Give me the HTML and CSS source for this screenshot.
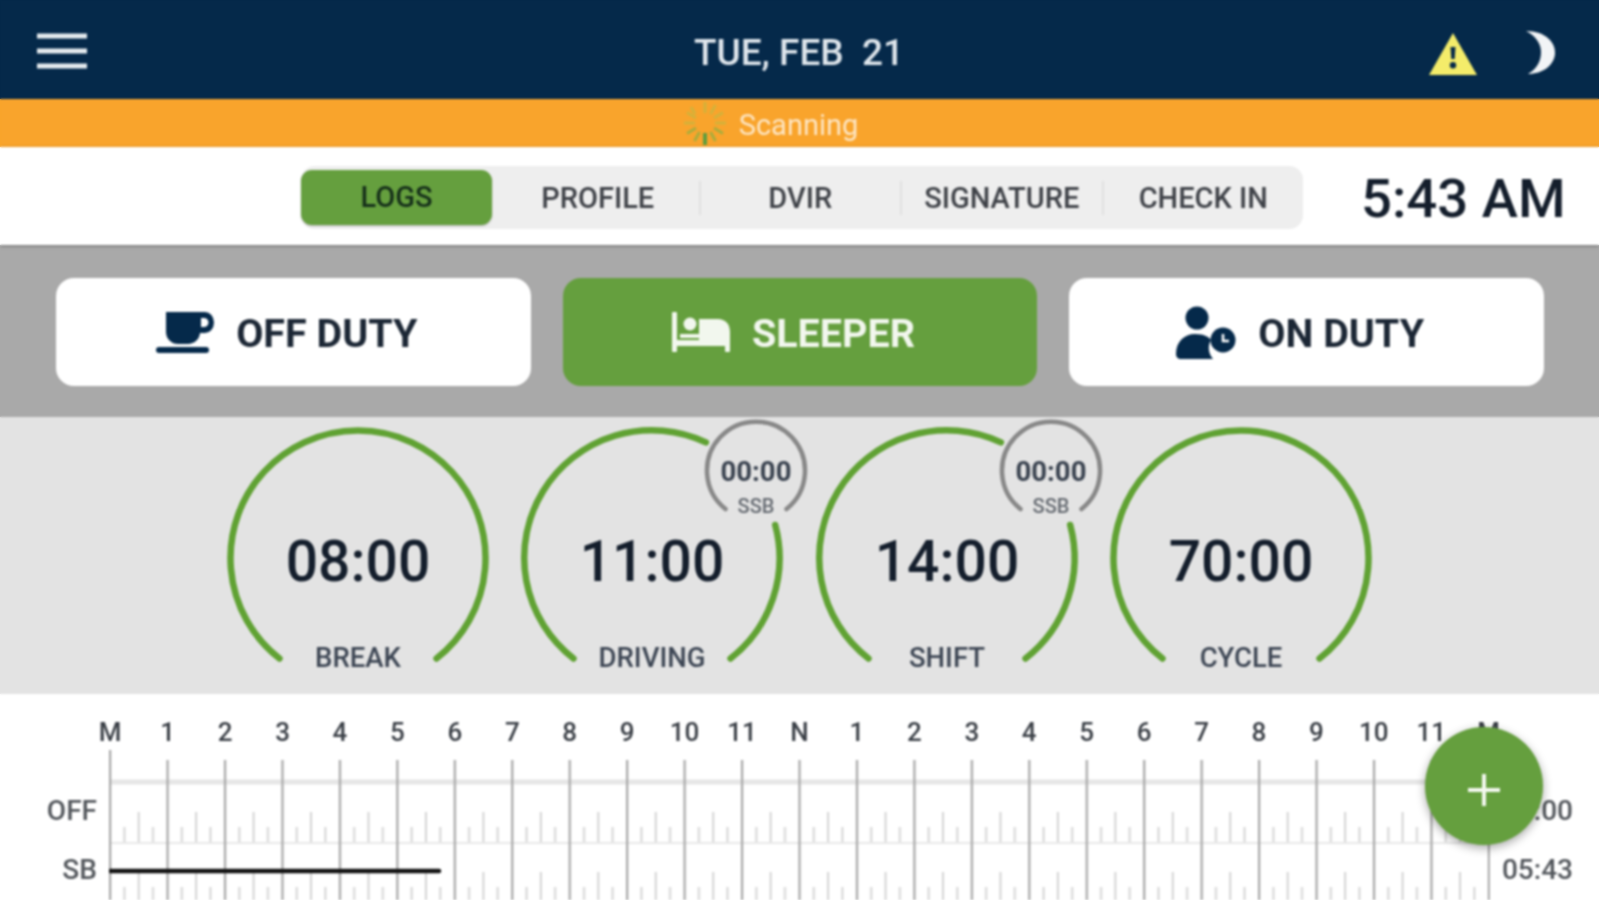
FILE: index.html
```html
<!DOCTYPE html>
<html lang="en">
<head>
  <meta charset="UTF-8">
  <title>Logs</title>
  <link rel="stylesheet" href="styles.css">
</head>
<body>
<div class="app">

  <header class="topbar">
    <svg class="menu" viewBox="0 0 50 36"><path d="M0 3H50M0 18H50M0 33H50"/></svg>
    <div class="date">TUE, FEB&nbsp; 21</div>
    <svg class="warn" viewBox="0 0 48 42">
      <path class="warn-bg" d="M24 0L48 42H0Z"/>
      <path class="warn-mark" d="M21.5 14h5l-.8 12h-3.4zM24 29a3.2 3.2 0 1 1 0 6.4a3.2 3.2 0 0 1 0-6.4z"/>
    </svg>
    <svg class="moon" viewBox="0 0 30 45"><path d="M0 1C20 1 30 13 29 24C28 35 17 44 2 44C12 38 15 30 15 22C15 14 10 6 0 1Z"/></svg>
  </header>

  <div class="status">
    <svg class="spinner" viewBox="0 0 44 44">
      <path class="ray-a" d="M22 1V12M32.5 4L27.5 13M40 11.5L31 17M43 22H32M12 13L8 6M4 11.5L13 17M1 22H12"/>
      <path class="ray-b" d="M40 32.5L31 27M32.5 40L27.5 31M11.5 40L16.5 31M4 32.5L13 27"/>
      <path class="ray-c" d="M22 32V44"/>
    </svg>
    <span>Scanning</span>
  </div>

  <nav class="tabrow">
    <div class="tabs">
      <div class="tab active">LOGS</div>
      <div class="tab">PROFILE</div>
      <div class="tab sep">DVIR</div>
      <div class="tab sep">SIGNATURE</div>
      <div class="tab sep">CHECK IN</div>
    </div>
    <div class="clock">5:43 AM</div>
  </nav>

  <section class="duty">
    <div class="duty-btn">
      <svg class="ico ico-cup" viewBox="0 0 58 42">
        <path fill-rule="evenodd" d="M10 1H49A9 10.5 0 0 1 49 22H44A12 12 0 0 1 32 33H22A12 12 0 0 1 10 21ZM45 7V16H48A4.5 4.5 0 0 0 48 7Z"/>
        <rect x="0" y="36" width="53" height="6" rx="3"/>
      </svg>
      <span>OFF DUTY</span>
    </div>
    <div class="duty-btn on">
      <svg class="ico ico-bed" viewBox="0 0 58 40">
        <rect x="0" y="0" width="5" height="40" rx="1"/>
        <rect x="0" y="28" width="58" height="6"/>
        <rect x="53" y="28" width="5" height="12" rx="1"/>
        <path d="M27 7H46C53 7 58 12 58 20V29H27Z"/>
        <rect x="8" y="22" width="20" height="4"/>
        <circle cx="18" cy="12" r="6.5"/>
      </svg>
      <span>SLEEPER</span>
    </div>
    <div class="duty-btn">
      <svg class="ico ico-person" viewBox="0 0 60 54">
        <circle cx="21" cy="12" r="11.5"/>
        <path d="M0 48C0 36 8 28 19 28C28 28 33 31 35 34C31 41 33 48 37 53H5C2 53 0 51 0 48Z"/>
        <circle cx="47" cy="34" r="12.5"/>
        <path class="hand" d="M47 28V35H53"/>
      </svg>
      <span>ON DUTY</span>
    </div>
  </section>

  <section class="dials">
    <svg class="dial" viewBox="0 0 294.5 277">
      <path class="arc" d="M68.5 241.5A127.5 127.5 0 1 1 225.5 241.5"/>
      <text class="dial-val" x="147" y="164">08:00</text>
      <text class="dial-lbl" x="147" y="250">BREAK</text>
    </svg>
    <svg class="dial" viewBox="0 0 294.5 277">
      <path class="arc" d="M68.5 241.5A127.5 127.5 0 0 1 200.9 25.4"/>
      <path class="arc" d="M270.2 108A127.5 127.5 0 0 1 225.5 241.5"/>
      <path class="arc-sm" d="M220.5 92A49 49 0 1 1 281.5 92"/>
      <text class="sm-val" x="251" y="64">00:00</text>
      <text class="sm-lbl" x="251" y="96">SSB</text>
      <text class="dial-val" x="147" y="164">11:00</text>
      <text class="dial-lbl" x="147" y="250">DRIVING</text>
    </svg>
    <svg class="dial" viewBox="0 0 294.5 277">
      <path class="arc" d="M68.5 241.5A127.5 127.5 0 0 1 200.9 25.4"/>
      <path class="arc" d="M270.2 108A127.5 127.5 0 0 1 225.5 241.5"/>
      <path class="arc-sm" d="M220.5 92A49 49 0 1 1 281.5 92"/>
      <text class="sm-val" x="251" y="64">00:00</text>
      <text class="sm-lbl" x="251" y="96">SSB</text>
      <text class="dial-val" x="147" y="164">14:00</text>
      <text class="dial-lbl" x="147" y="250">SHIFT</text>
    </svg>
    <svg class="dial" viewBox="0 0 294.5 277">
      <path class="arc" d="M68.5 241.5A127.5 127.5 0 1 1 225.5 241.5"/>
      <text class="dial-val" x="147" y="164">70:00</text>
      <text class="dial-lbl" x="147" y="250">CYCLE</text>
    </svg>
  </section>

  <section class="chart">
    <div class="hours">
      <span>M</span><span>1</span><span>2</span><span>3</span><span>4</span><span>5</span><span>6</span><span>7</span><span>8</span><span>9</span><span>10</span><span>11</span><span>N</span><span>1</span><span>2</span><span>3</span><span>4</span><span>5</span><span>6</span><span>7</span><span>8</span><span>9</span><span>10</span><span>11</span><span>M</span>
    </div>
    <div class="chart-body">
      <div class="rows rows-left">
        <div>OFF</div>
        <div>SB</div>
      </div>
      <svg class="grid" width="1381" height="150">
        <defs>
          <pattern id="hourlines" width="57.45" height="150" patternUnits="userSpaceOnUse">
            <path class="hour" d="M1 10V150"/>
          </pattern>
          <pattern id="ticks" width="57.45" height="60" y="33" patternUnits="userSpaceOnUse">
            <path class="tick" d="M15.4 44V60M29.7 29V60M44 44V60"/>
          </pattern>
        </defs>
        <rect y="33" width="1381" height="117" fill="url(#ticks)"/>
        <path class="rule-thick" d="M0 32H1381"/>
        <path class="rule-thin" d="M0 93H1381"/>
        <rect width="1381" height="150" fill="url(#hourlines)"/>
        <path class="hour" d="M1 0V10"/>
        <path class="duty-line" d="M1 121H330"/>
      </svg>
      <div class="rows rows-right">
        <div>00:00</div>
        <div>05:43</div>
      </div>
    </div>
  </section>

  <div class="fab"><svg viewBox="0 0 32 32"><path d="M16 0V32M0 16H32"/></svg></div>
</div>
</body>
</html>
```
FILE: styles.css
```css
* {
    box-sizing: border-box;
}

html, body {
    margin: 0;
    height: 100%;
    overflow: hidden;
}

/* same bands as the page, so the blur doesn't lighten the window edges */
body {
    background: linear-gradient(#05294a 99px, #f9a42c 99px 147px, white 147px 245px, #a9a9a9 245px 417px, #e3e3e3 417px 694px, white 694px);
}

.app {
    position: relative;
    display: flex;
    flex-direction: column;
    height: 900px;
    overflow: hidden;
    font-family: Roboto, "Liberation Sans", sans-serif;
    color: #141e2c;
    filter: blur(1px);
}

/* top bar */
.topbar {
    position: relative;
    display: flex;
    align-items: center;
    height: 99px;
    padding: 0 43px 0 37px;
    background-color: #05294a;
}

.menu {
    width: 50px;
    height: 36px;
    margin-top: 2px;
}

.menu path {
    stroke: #e6ebef;
    stroke-width: 5;
    fill: none;
}

.date {
    flex: 1;
    text-align: center;
    font-size: 37px;
    font-weight: 500;
    color: #dfe6ec;
    margin: 5px 0 0 82px;
}

.warn {
    width: 48px;
    height: 42px;
    margin: 8px 49px 0 0;
}

.warn-bg { fill: #f4ec6a; }
.warn-mark { fill: #05294a; }

.moon {
    width: 30px;
    height: 45px;
    margin-top: 6px;
    fill: #f2f4f6;
}

/* scanning strip */
.status {
    display: flex;
    align-items: center;
    justify-content: center;
    gap: 12px;
    height: 48px;
    padding-right: 58px;
    background-color: #f9a42c;
    color: #fde6c4;
    font-size: 29px;
}

.status span {
    margin-top: 3px;
}

.spinner {
    width: 44px;
    height: 44px;
    fill: none;
    stroke-width: 3;
}

.ray-a { stroke: #d3b23a; }
.ray-b { stroke: #a9ad3c; }
.ray-c { stroke: #5f9e3e; stroke-width: 4; }

/* tabs */
.tabrow {
    position: relative;
    z-index: 1;
    display: flex;
    align-items: center;
    height: 98px;
    padding: 3px 0 0 301px;
    background: white;
    box-shadow: 0 1px 3px rgba(0, 0, 0, 0.35);
}

.tabs {
    display: flex;
    align-items: center;
    width: 1002px;
    height: 63px;
    border-radius: 14px;
    background-color: #eeeeee;
}

.tab {
    position: relative;
    flex: none;
    width: 201.5px;
    text-align: center;
    font-size: 29px;
    font-weight: 500;
    color: #3f4248;
}

.tab.active {
    width: 191px;
    height: 55px;
    margin-right: 5px;
    line-height: 55px;
    border-radius: 11px;
    background-color: #659f3e;
    color: #16301a;
    box-shadow: 0 1px 2px rgba(0, 0, 0, 0.25);
}

.tab.sep {
    border-left: 2px solid #e0e0e0;
    height: 34px;
    line-height: 34px;
}

.clock {
    margin: 1px 0 0 58px;
    font-size: 54.5px;
    font-weight: 500;
    white-space: nowrap;
}

/* duty buttons */
.duty {
    display: grid;
    grid-template-columns: repeat(3, 1fr);
    gap: 32px;
    height: 172px;
    padding: 33px 55px 31px 56px;
    background-color: #a9a9a9;
}

.duty-btn {
    display: flex;
    align-items: center;
    justify-content: center;
    gap: 22px;
    padding: 2px 3px 0 0;
    border-radius: 18px;
    background: white;
    font-size: 39.5px;
    font-weight: 700;
    color: #1c2735;
}

.duty-btn.on {
    background-color: #659f3e;
    color: #f2f7ee;
}

.ico {
    fill: #05294a;
    margin-left: -10px;
}

.ico-cup { width: 58px; height: 42px; margin-top: -2px; }
.ico-bed { width: 58px; height: 40px; fill: #f2f7ee; margin-top: -2px; }
.ico-person { width: 60px; height: 54px; margin-top: -1px; }

.hand {
    fill: none;
    stroke: white;
    stroke-width: 2.5;
}

/* dials */
.dials {
    display: flex;
    justify-content: center;
    height: 277px;
    background-color: #e3e3e3;
}

.dial {
    width: 294.5px;
    height: 277px;
    overflow: visible;
    text-anchor: middle;
}

.arc, .arc-sm {
    fill: none;
    stroke-linecap: round;
}

.arc {
    stroke: #60a233;
    stroke-width: 6.5;
}

.arc-sm {
    stroke: #888888;
    stroke-width: 4.5;
}

.dial-val {
    font-size: 57px;
    font-weight: 500;
    fill: #141e2c;
}

.dial-lbl {
    font-size: 27.5px;
    font-weight: 500;
    fill: #3d4654;
}

.sm-val {
    font-size: 27.5px;
    font-weight: 700;
    fill: #3a4350;
}

.sm-lbl {
    font-size: 20px;
    font-weight: 500;
    fill: #666b72;
}

/* log chart */
.chart {
    flex: 1;
    background: white;
    overflow: hidden;
}

.hours {
    display: flex;
    height: 56px;
    padding: 25px 0 0 81.5px;
    font-size: 26px;
    font-weight: 500;
    line-height: 26px;
    color: #3a3f46;
}

.hours span {
    width: 57.45px;
    text-align: center;
}

.chart-body {
    display: flex;
}

.grid {
    flex: none;
}

.hour {
    stroke: #a8a8a8;
    stroke-width: 2.5;
    fill: none;
}

.tick {
    stroke: #d4d4d4;
    stroke-width: 2;
    fill: none;
}

.rule-thick {
    stroke: #e6e6e6;
    stroke-width: 5;
}

.rule-thin {
    stroke: #e8e8e8;
    stroke-width: 2;
}

.duty-line {
    stroke: #111;
    stroke-width: 4.5;
    stroke-linecap: round;
}

.rows {
    flex: none;
    padding-top: 45px;
    font-size: 28px;
    font-weight: 500;
    color: #53575c;
}

.rows div {
    height: 59px;
    line-height: 32px;
}

.rows-left {
    width: 109px;
    padding-right: 12px;
    text-align: right;
}

.rows-right {
    width: 109px;
    padding-right: 26px;
    text-align: right;
}

/* add button */
.fab {
    position: absolute;
    top: 727px;
    right: 56px;
    display: flex;
    align-items: center;
    justify-content: center;
    width: 118px;
    height: 118px;
    padding-top: 8px;
    border-radius: 50%;
    background-color: #659f3e;
    box-shadow: 0 3px 10px rgba(0, 0, 0, 0.35);
}

.fab svg {
    width: 32px;
    height: 32px;
}

.fab path {
    stroke: #f4f8f0;
    stroke-width: 4;
}
```
